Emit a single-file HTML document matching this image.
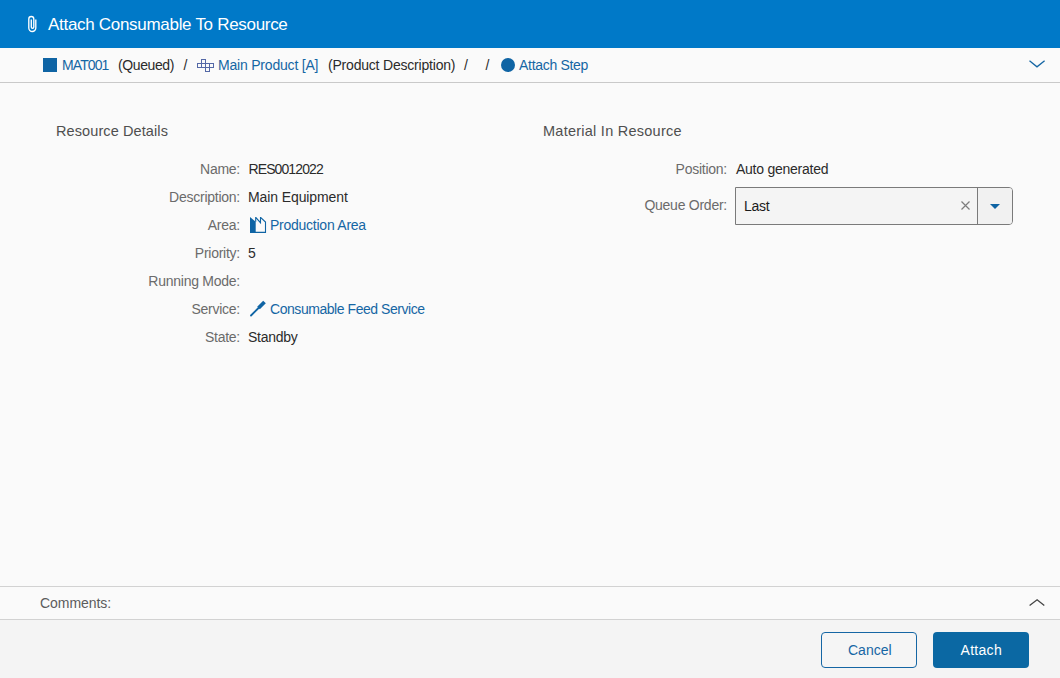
<!DOCTYPE html>
<html><head><meta charset="utf-8">
<style>
html,body{margin:0;padding:0;}
body{width:1060px;height:678px;overflow:hidden;background:#fafafa;position:relative;font-family:"Liberation Sans",sans-serif;}
.a{position:absolute;white-space:pre;line-height:1;}
#hdr{position:absolute;left:0;top:0;width:1060px;height:48px;background:#0079c8;}
#bc{position:absolute;left:0;top:48px;width:1060px;height:34px;background:#fafafa;border-bottom:1px solid #c9c9c9;}
.lnk{color:#1566a4;}
.lbl{color:#6b6b6b;font-size:14px;letter-spacing:-0.25px;}
.val{color:#2b2b2b;font-size:14px;letter-spacing:-0.25px;}
.sec{color:#4f4f4f;font-size:14.5px;}
#cm{position:absolute;left:0;top:586px;width:1060px;height:32px;border-top:1px solid #d2d2d2;border-bottom:1px solid #d2d2d2;background:#fafafa;}
#ft{position:absolute;left:0;top:620px;width:1060px;height:58px;background:#f4f4f4;}
.btn{position:absolute;top:632px;height:36px;width:96px;box-sizing:border-box;border-radius:4px;font-size:14px;}
</style></head><body>
<div id="hdr"></div>
<svg class="a" style="left:0;top:0" width="60" height="48">
  <path d="M31.3 19.5 V27 A1.25 1.25 0 0 0 33.8 27 V19 A2.5 2.5 0 0 0 28.8 19 V28 A3.5 3.5 0 0 0 35.8 28 V19.5" fill="none" stroke="#fff" stroke-width="1.35"/>
</svg>
<div class="a" style="left:48px;top:16px;font-size:17px;color:#fff;letter-spacing:-0.3px">Attach Consumable To Resource</div>

<div id="bc"></div>
<div class="a" style="left:43px;top:58px;width:14px;height:14px;background:#0f64a4"></div>
<div class="a lnk" style="left:62px;top:58px;font-size:14px;letter-spacing:-0.9px">MAT001</div>
<div class="a" style="left:118px;top:58px;font-size:14px;letter-spacing:-0.4px;color:#2b2b2b">(Queued)</div>
<div class="a" style="left:183.5px;top:58px;font-size:14px;color:#2b2b2b">/</div>
<svg class="a" style="left:190px;top:50px" width="30" height="30">
  <path d="M7.5 13.5 H23.5 M7.5 17.5 H23.5 M11.5 9.5 H15.5 M15.5 21.5 H19.5 M7.5 13.5 V17.5 M11.5 9.5 V17.5 M15.5 9.5 V21.5 M19.5 13.5 V21.5 M23.5 13.5 V17.5" fill="none" stroke="#5468a6" stroke-width="1" stroke-linecap="square"/>
</svg>
<div class="a lnk" style="left:218px;top:58px;font-size:14px;letter-spacing:-0.2px">Main Product [A]</div>
<div class="a" style="left:328px;top:58px;font-size:14px;letter-spacing:-0.2px;color:#2b2b2b">(Product Description)</div>
<div class="a" style="left:464px;top:58px;font-size:14px;color:#2b2b2b">/</div>
<div class="a" style="left:485.5px;top:58px;font-size:14px;color:#2b2b2b">/</div>
<div class="a" style="left:500.5px;top:58px;width:14px;height:14px;border-radius:50%;background:#0f64a4"></div>
<div class="a lnk" style="left:519px;top:58px;font-size:14px;letter-spacing:-0.3px">Attach Step</div>
<svg class="a" style="left:1020px;top:50px" width="36" height="30">
  <path d="M9.5 10.8 L17 16.8 L24.6 10.8" fill="none" stroke="#1566a4" stroke-width="1.3"/>
</svg>

<div class="a sec" style="left:56px;top:124px;letter-spacing:0.1px">Resource Details</div>
<div class="a sec" style="left:543px;top:124px;letter-spacing:0.25px">Material In Resource</div>

<div class="a lbl" style="right:820px;top:162px">Name:</div>
<div class="a val" style="left:248.5px;top:162px;letter-spacing:-0.9px">RES0012022</div>
<div class="a lbl" style="right:820px;top:190px">Description:</div>
<div class="a val" style="left:248px;top:190px;letter-spacing:-0.1px">Main Equipment</div>
<div class="a lbl" style="right:820px;top:218px">Area:</div>
<svg class="a" style="left:250px;top:217px" width="17" height="17">
  <path d="M0 0 L5.7 4.8 V16 H0 Z" fill="#0f64a4"/>
  <path d="M5.7 4.8 V0.3 L10.5 5.7 V0.3 L15.5 5 V15.4 H0.5" fill="none" stroke="#0f64a4" stroke-width="1.1"/>
</svg>
<div class="a lbl lnk" style="left:270px;top:218px;color:#1566a4">Production Area</div>
<div class="a lbl" style="right:820px;top:246px">Priority:</div>
<div class="a val" style="left:248px;top:246px">5</div>
<div class="a lbl" style="right:820px;top:274px">Running Mode:</div>
<div class="a lbl" style="right:820px;top:302px">Service:</div>
<svg class="a" style="left:246px;top:298px" width="24" height="22">
  <path d="M5 17.5 L12.5 10" stroke="#0f64a4" stroke-width="1.8" stroke-linecap="round"/>
  <path d="M12.5 10 L18.5 4" stroke="#0f64a4" stroke-width="3.8" stroke-linecap="butt"/>
</svg>
<div class="a lbl" style="left:270px;top:302px;color:#1566a4;letter-spacing:-0.45px">Consumable Feed Service</div>
<div class="a lbl" style="right:820px;top:330px">State:</div>
<div class="a val" style="left:248px;top:330px">Standby</div>

<div class="a lbl" style="right:333px;top:162px">Position:</div>
<div class="a val" style="left:736px;top:162px">Auto generated</div>
<div class="a lbl" style="right:333px;top:198px">Queue Order:</div>
<div class="a" style="left:735px;top:187px;width:278px;height:38px;box-sizing:border-box;border:1px solid #7a7a7a;border-radius:0 4px 4px 0;background:#f4f4f4"></div>
<div class="a" style="left:977px;top:188px;width:1px;height:36px;background:#7a7a7a"></div>
<div class="a" style="left:978px;top:188px;width:34px;height:36px;background:#f1f1f1;border-radius:0 3px 3px 0"></div>
<div class="a val" style="left:744px;top:199px;color:#1b1b1b">Last</div>
<svg class="a" style="left:955px;top:195px" width="60" height="20">
  <path d="M6.5 6.5 L14.5 14.5 M14.5 6.5 L6.5 14.5" stroke="#7d7d7d" stroke-width="1.15"/>
  <path d="M35 9 H45 L40 14 Z" fill="#0f64a4"/>
</svg>

<div id="cm"></div>
<div class="a" style="left:40px;top:596px;font-size:14px;letter-spacing:-0.05px;color:#5c5c5c">Comments:</div>
<svg class="a" style="left:1020px;top:590px" width="36" height="26">
  <path d="M9.6 15.5 L17.1 9.8 L24.3 15.5" fill="none" stroke="#444" stroke-width="1.3"/>
</svg>
<div id="ft"></div>
<div class="btn" style="left:821px;border:1px solid #1566a4;background:#f5f5f5;color:#1566a4"><span class="a" style="left:26px;top:10px">Cancel</span></div>
<div class="btn" style="left:933px;background:#0b68a3;color:#fff"><span class="a" style="left:27.5px;top:11px;letter-spacing:0.3px">Attach</span></div>
</body></html>
